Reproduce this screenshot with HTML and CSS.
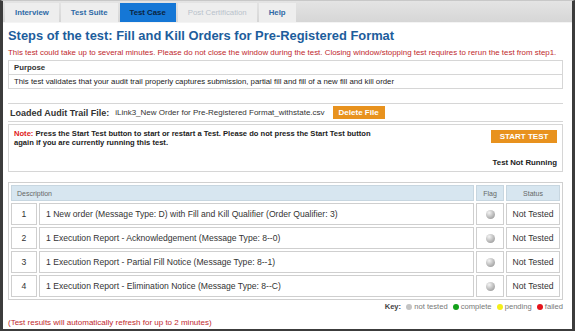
FILE: index.html
```html
<!DOCTYPE html>
<html lang="en">
<head>
    <meta charset="UTF-8">
    <title>Test Case</title>
    <link rel="stylesheet" href="styles.css">
</head>
<body>
    <div class="frame">
        <ul class="tabs">
            <li><a>Interview</a></li>
            <li><a>Test Suite</a></li>
            <li class="active"><a>Test Case</a></li>
            <li class="disabled"><a>Post Certification</a></li>
            <li><a>Help</a></li>
        </ul>

        <div class="content">
            <h1>Steps of the test: Fill and Kill Orders for Pre-Registered Format</h1>
            <p class="warning">This test could take up to several minutes. Please do not close the window during the test. Closing window/stopping test requires to rerun the test from step1.</p>

            <div class="purpose">
                <div class="purpose-title">Purpose</div>
                <div class="purpose-text">This test validates that your audit trail properly captures submission, partial fill and fill of a new fill and kill order</div>
            </div>

            <div class="loaded-file">
                <span class="loaded-label">Loaded Audit Trail File:</span>
                <span class="file-name">iLink3_New Order for Pre-Registered Format_withstate.csv</span>
                <button class="orange-btn">Delete File</button>
            </div>

            <div class="note-box">
                <div class="note-row">
                    <p class="note"><span class="note-label">Note:</span> Press the Start Test button to start or restart a Test. Please do not press the Start Test button again if you are currently running this test.</p>
                    <button class="orange-btn start-btn">START TEST</button>
                </div>
                <div class="run-status">Test Not Running</div>
            </div>

            <table class="steps">
                <thead>
                    <tr>
                        <th colspan="2" class="desc-head">Description</th>
                        <th class="flag-col">Flag</th>
                        <th class="status-col">Status</th>
                    </tr>
                </thead>
                <tbody>
                    <tr>
                        <td class="num">1</td>
                        <td>1 New order (Message Type: D) with Fill and Kill Qualifier (Order Qualifier: 3)</td>
                        <td class="flag"><span class="dot grey"></span></td>
                        <td class="status">Not Tested</td>
                    </tr>
                    <tr>
                        <td class="num">2</td>
                        <td>1 Execution Report - Acknowledgement (Message Type: 8--0)</td>
                        <td class="flag"><span class="dot grey"></span></td>
                        <td class="status">Not Tested</td>
                    </tr>
                    <tr>
                        <td class="num">3</td>
                        <td>1 Execution Report - Partial Fill Notice (Message Type: 8--1)</td>
                        <td class="flag"><span class="dot grey"></span></td>
                        <td class="status">Not Tested</td>
                    </tr>
                    <tr>
                        <td class="num">4</td>
                        <td>1 Execution Report - Elimination Notice (Message Type: 8--C)</td>
                        <td class="flag"><span class="dot grey"></span></td>
                        <td class="status">Not Tested</td>
                    </tr>
                </tbody>
            </table>

            <div class="key">
                <b>Key:</b>
                <span class="key-item"><span class="small-dot grey"></span>not tested</span>
                <span class="key-item"><span class="small-dot green"></span>complete</span>
                <span class="key-item"><span class="small-dot yellow"></span>pending</span>
                <span class="key-item"><span class="small-dot red"></span>failed</span>
            </div>

            <p class="refresh">(Test results will automatically refresh for up to 2 minutes)</p>
        </div>
    </div>
</body>
</html>
```

FILE: styles.css
```css
body {
    margin: 0;
    font-family: "Liberation Sans", Arial, sans-serif;
    background-color: #fff;
}

.frame {
    width: 575px;
    height: 331px;
    box-sizing: border-box;
    border-left: 3px solid #3c3c3c;
    border-right: 3px solid #3c3c3c;
    border-bottom: 2px solid #3c3c3c;
    border-top: 1px solid #c8c8c8;
    overflow: hidden;
}

.tabs {
    list-style: none;
    margin: 0;
    padding: 2px 0 0 2px;
    display: flex;
    gap: 2px;
    background: linear-gradient(#e4e4e4, #d6d6d6);
    height: 19px;
    border-bottom: 1px solid #f4f4f4;
}

.tabs li {
    display: flex;
    align-items: center;
    padding: 0 10px;
    background-color: #eeeeee;
    font-size: 7.8px;
    font-weight: bold;
    color: #2f6aa6;
}

.tabs li.active {
    background-color: #1577d6;
    color: #0b2440;
}

.tabs li.disabled {
    color: #b9c2cc;
    font-weight: normal;
}

.content {
    padding: 0 9px 0 5px;
}

h1 {
    margin: 5px 0 0 0;
    font-size: 12.9px;
    color: #1d5d9c;
}

.warning {
    margin: 5px 0 0 0;
    font-size: 7.9px;
    color: #c0282d;
}

.purpose {
    margin-top: 3px;
    border: 1px solid #d6d6d6;
    font-size: 7.8px;
    color: #222;
}

.purpose-title {
    padding: 2px 5px 2px;
    font-weight: bold;
    border-bottom: 1px solid #d6d6d6;
    color: #333;
}

.purpose-text {
    padding: 2px 5px 2px;
}

.loaded-file {
    margin-top: 14px;
    display: flex;
    align-items: center;
    padding: 2px 2px;
    border-top: 1px solid #d6d6d6;
    border-bottom: 1px solid #d6d6d6;
}

.loaded-label {
    font-size: 9px;
    font-weight: bold;
    color: #333;
}

.file-name {
    font-size: 8px;
    margin-left: 6px;
    color: #333;
}

.orange-btn {
    font-family: inherit;
    border: none;
    background-color: #e8921e;
    color: #fff;
    font-weight: bold;
    font-size: 8px;
    padding: 2px 6px;
    margin-left: 8px;
}

.note-box {
    margin-top: 2px;
    border: 1px solid #d6d6d6;
    padding: 4px 5px;
}

.note-row {
    display: flex;
    justify-content: space-between;
    align-items: flex-start;
}

.note {
    margin: 0;
    font-size: 7.6px;
    line-height: 1.2;
    font-weight: bold;
    color: #222;
    width: 375px;
}

.note-label {
    color: #e02020;
}

.start-btn {
    width: 66px;
    padding: 2px 0;
    margin-top: 1px;
}

.run-status {
    text-align: right;
    font-size: 7.8px;
    font-weight: bold;
    color: #222;
    margin-top: 11px;
}

.steps {
    margin-top: 10px;
    width: 100%;
    border-collapse: separate;
    border-spacing: 2px;
    background-color: #fff;
    border: 1px solid #d0d0d0;
    font-size: 8.6px;
    color: #333;
}

.steps th {
    background-color: #d7e6f0;
    font-weight: normal;
    color: #666;
    font-size: 7px;
    height: 12px;
    border: 1px solid #c7d6e0;
}

.steps th.desc-head {
    text-align: left;
    padding-left: 5px;
}

.steps td {
    border: 1px solid #cfcfcf;
    height: 20px;
    padding: 0 6px;
}

.steps td.num {
    width: 12px;
    text-align: center;
}

.flag-col,
.steps td.flag {
    width: 26px;
    text-align: center;
    padding: 0;
}

.status-col,
.steps td.status {
    width: 46px;
    padding: 0 3px;
    text-align: center;
    white-space: nowrap;
}

.dot {
    display: inline-block;
    width: 9px;
    height: 9px;
    border-radius: 50%;
    vertical-align: middle;
}

.dot.grey {
    background: radial-gradient(circle at 35% 30%, #f4f4f4, #b4b4b4 60%, #8a8a8a);
}

.key {
    margin-top: 2px;
    text-align: right;
    font-size: 7.6px;
    color: #777;
}

.key b {
    color: #444;
}

.key-item {
    margin-left: 3px;
}

.small-dot {
    display: inline-block;
    width: 6px;
    height: 6px;
    border-radius: 50%;
    margin-right: 2px;
    vertical-align: -1px;
}

.small-dot.grey { background-color: #c4c4c4; }
.small-dot.green { background-color: #13a11a; }
.small-dot.yellow { background-color: #f4ee1a; }
.small-dot.red { background-color: #e5141b; }

.refresh {
    margin: 7px 0 0 0;
    font-size: 8px;
    color: #c0282d;
}
```
